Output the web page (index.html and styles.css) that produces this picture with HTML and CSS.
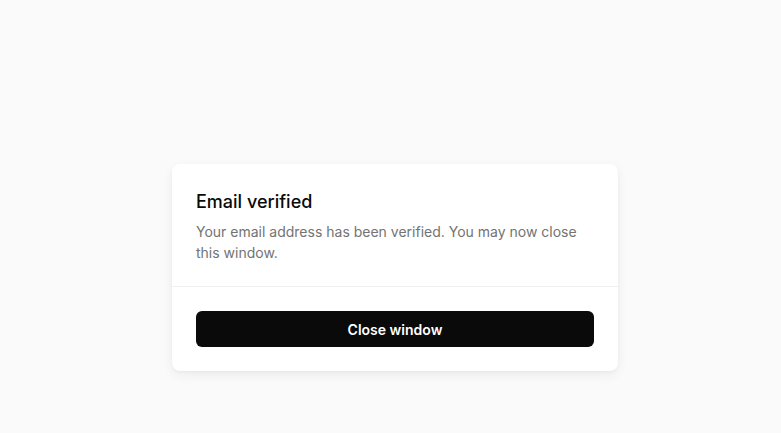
FILE: index.html
```html
<!DOCTYPE html>
<html lang="en">
<head>
<meta charset="utf-8">
<title>Email verified</title>
<link rel="stylesheet" href="styles.css">
</head>
<body>
<main class="page">
  <section class="card">
    <div class="card-body">
      <h1 class="title">Email verified</h1>
      <p class="desc">Your email address has been verified. You may now close this window.</p>
    </div>
    <div class="card-footer">
      <button class="btn" type="button">Close window</button>
    </div>
  </section>
</main>
</body>
</html>
```
FILE: styles.css
```css
html, body {
  margin: 0;
  padding: 0;
}
body {
  background: #fafafa;
  font-family: Inter, "Noto Sans", sans-serif;
  color: #0a0a0a;
  height: 433px;
  overflow: hidden;
}
.page {
  display: flex;
  justify-content: center;
  padding: 164px 0 0 9px;
}
.card {
  width: 446px;
  background: #fff;
  border-radius: 8px;
  box-shadow: 0 4px 12px rgba(0, 0, 0, 0.06), 0 1px 3px rgba(0, 0, 0, 0.04);
}
.card-body {
  padding: 24px 24px 23px;
  border-bottom: 1px solid #f0f0f0;
}
.title {
  margin: 0;
  font-size: 18px;
  line-height: 28px;
  font-weight: 500;
  color: #0a0a0a;
}
.desc {
  margin: 5px 0 0;
  font-size: 14px;
  line-height: 21px;
  color: #737373;
}
.card-footer {
  padding: 24px 24px 24px;
}
.btn {
  display: block;
  width: 100%;
  height: 36px;
  border: 0;
  border-radius: 6px;
  background: #0a0a0a;
  color: #fff;
  font-family: Inter, "Noto Sans", sans-serif;
  font-size: 14px;
  font-weight: 600;
  cursor: pointer;
}
```
